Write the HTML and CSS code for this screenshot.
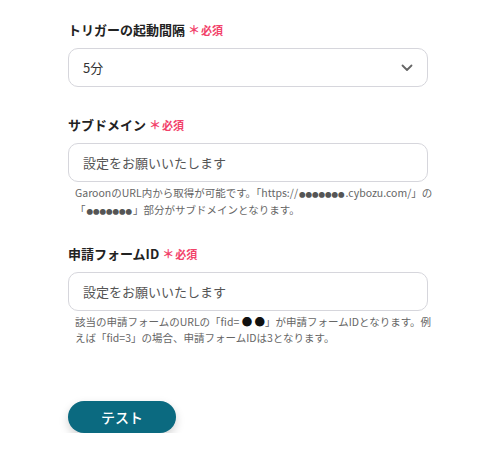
FILE: index.html
```html
<!DOCTYPE html>
<html lang="ja">
<head>
<meta charset="utf-8">
<link rel="stylesheet" href="styles.css">
</head>
<body>
<div class="form">
  <div class="field">
    <div class="label">トリガーの起動間隔<span class="req"><span class="ast">＊</span>必須</span></div>
    <div class="box select">
      <span class="value">5分</span>
      <svg class="chev" width="12" height="8" viewBox="0 0 12 8"><path d="M1.5 1.5 L6 6 L10.5 1.5" fill="none" stroke="#666" stroke-width="1.8" stroke-linecap="round" stroke-linejoin="round"/></svg>
    </div>
  </div>
  <div class="field">
    <div class="label">サブドメイン<span class="req"><span class="ast">＊</span>必須</span></div>
    <div class="box"><span class="ph">設定をお願いいたします</span></div>
    <p class="help"><span>GaroonのURL内から取得が可能です。「https://</span><span class="dots">●●●●●●●</span><span>.cybozu.com/」の</span><span>「</span><span class="dots">●●●●●●●</span><span>」部分がサブドメインとなります。</span></p>
  </div>
  <div class="field">
    <div class="label">申請フォームID<span class="req"><span class="ast">＊</span>必須</span></div>
    <div class="box"><span class="ph">設定をお願いいたします</span></div>
    <p class="help"><span>該当の申請フォームのURLの「fid= </span><span class="blk">●</span> <span class="blk">●</span><span>」が申請フォームIDとなります。例</span><span>えば「fid=3」の場合、申請フォームIDは3となります。</span></p>
  </div>
  <div class="actions">
    <button class="btn">テスト</button>
  </div>
</div>
</body>
</html>
```
FILE: styles.css
```css
html, body { margin: 0; padding: 0; background: #fff; }
body {
  font-family: "Noto Sans CJK JP", "Noto Sans", sans-serif;
  color: #333;
}
.form {
  width: 360px;
  padding: 20px 0 0 68px;
}
.field { margin-bottom: 28px; }
.label {
  font-size: 13px;
  font-weight: 700;
  color: #222;
  line-height: 20px;
  height: 20px;
  margin-bottom: 8px;
  display: flex;
  align-items: center;
}
.req {
  color: #f2426a;
  font-size: 11px;
  font-weight: 700;
  margin-left: 3px;
  display: inline-flex;
  align-items: center;
}
.ast { font-size: 12px; margin-right: 1px; }
.box {
  height: 39px;
  box-sizing: border-box;
  border: 1px solid #d6d6dc;
  border-radius: 10px;
  display: flex;
  align-items: center;
  padding: 0 14px;
  font-size: 13px;
}
.select { justify-content: space-between; }
.value { color: #333; }
.ph { color: #555; }
.help {
  margin: 3px -6px -3px 7px;
  font-size: 10.5px;
  line-height: 16px;
  color: #666;
  line-break: anywhere;
}
.dots { font-size: 6.5px; margin: 0 1px; color: #555; }
.blk { color: #111; }
.actions { padding-top: 30px; }
.btn {
  width: 108px;
  height: 32px;
  border: none;
  border-radius: 16px;
  background: #0b6a80;
  color: #fff;
  font-family: inherit;
  font-size: 14px;
  font-weight: 500;
  box-shadow: 0 4px 10px rgba(0,0,0,0.18);
}
```
